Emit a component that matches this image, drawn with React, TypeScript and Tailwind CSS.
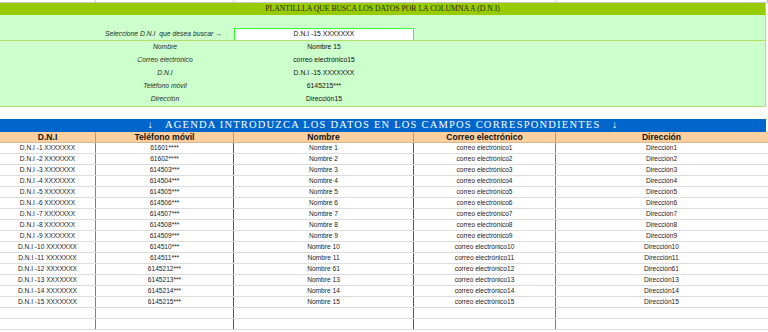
import React from 'react';

const COLS = 'grid grid-cols-[96px_138px_180px_142px_1fr]';

const rows = [
  ['D.N.I -1 XXXXXXX', '61601****', 'Nombre 1', 'correo electrónico1', 'Dirección1'],
  ['D.N.I -2 XXXXXXX', '61602****', 'Nombre 2', 'correo electrónico2', 'Dirección2'],
  ['D.N.I -3 XXXXXXX', '614503***', 'Nombre 3', 'correo electrónico3', 'Dirección3'],
  ['D.N.I -4 XXXXXXX', '614504***', 'Nombre 4', 'correo electrónico4', 'Dirección4'],
  ['D.N.I -5 XXXXXXX', '614505***', 'Nombre 5', 'correo electrónico5', 'Dirección5'],
  ['D.N.I -6 XXXXXXX', '614506***', 'Nombre 6', 'correo electrónico6', 'Dirección6'],
  ['D.N.I -7 XXXXXXX', '614507***', 'Nombre 7', 'correo electrónico7', 'Dirección7'],
  ['D.N.I -8 XXXXXXX', '614508***', 'Nombre 8', 'correo electrónico8', 'Dirección8'],
  ['D.N.I -9 XXXXXXX', '614509***', 'Nombre 9', 'correo electrónico9', 'Dirección9'],
  ['D.N.I -10 XXXXXXX', '614510***', 'Nombre 10', 'correo electrónico10', 'Dirección10'],
  ['D.N.I -11 XXXXXXX', '614511***', 'Nombre 11', 'correo electrónico11', 'Dirección11'],
  ['D.N.I -12 XXXXXXX', '6145212***', 'Nombre 61', 'correo electrónico12', 'Dirección61'],
  ['D.N.I -13 XXXXXXX', '6145213***', 'Nombre 13', 'correo electrónico13', 'Dirección13'],
  ['D.N.I -14 XXXXXXX', '6145214***', 'Nombre 14', 'correo electrónico14', 'Dirección14'],
  ['D.N.I -15 XXXXXXX', '6145215***', 'Nombre 15', 'correo electrónico15', 'Dirección15'],
  ['', '', '', '', ''],
  ['', '', '', '', ''],
];

const headers = ['D.N.I', 'Teléfono móvil', 'Nombre', 'Correo electrónico', 'Dirección'];

const found = [
  ['Nombre', 'Nombre 15'],
  ['Correo electrónico', 'correo electrónico15'],
  ['D.N.I', 'D.N.I -15 XXXXXXX'],
  ['Teléfono móvil', '6145215***'],
  ['Dirección', 'Dirección15'],
];

// vertical divider colour per column (last one has none)
const divider = ['border-[#7f7f7f]', 'border-[#595959]', 'border-[#595959]', 'border-[#7f7f7f]', 'border-transparent'];

export default function App() {
  return (
    <div className="w-[768px] h-[332px] overflow-hidden bg-white font-['Liberation_Sans',Arial,sans-serif]">
      {/* top sliver of previous row */}
      <div className={`${COLS} h-[3px] border-b border-[#c8c8c8]`}>
        {divider.map((d, i) => (
          <div key={i} className={`border-r ${d === 'border-transparent' ? 'border-[#bdbdbd]' : 'border-[#d4d4d4]'}`} />
        ))}
      </div>

      {/* search block */}
      <div className="w-[766px] border-r border-[#b2df63]">
        <div className="h-[12px] bg-[#99cc00] flex items-center justify-center">
          <span className="font-['Liberation_Serif','Times_New_Roman',serif] text-[7.7px] leading-none text-[#1c1f00]">
            PLANTILLLA QUE BUSCA LOS DATOS POR LA COLUMNA A (D.N.I)
          </span>
        </div>
        <div className="bg-[#ccffcc]">
          <div className="h-[13px]" />
          <div className="flex h-[13px] border-b border-[#b2df63]">
            <div className="w-[234px] flex items-center justify-end pr-[12px] text-[6.8px] italic text-[#1f2a1f]">
              Seleccione D.N.I&nbsp; que desea buscar →
            </div>
            <div className="w-[180px] bg-white border border-b-0 border-[#33ff33] flex items-center justify-center text-[6.8px] text-[#111]">
              D.N.I -15 XXXXXXX
            </div>
          </div>
          {found.map(([label, value]) => (
            <div key={label} className={`${COLS} h-[13px] items-center`}>
              <div />
              <div className="text-center text-[6.8px] italic text-[#1f2a1f]">{label}</div>
              <div className="text-center text-[6.8px] text-[#111]">{value}</div>
              <div />
              <div />
            </div>
          ))}
          <div className="h-px bg-[#b2df63]" />
        </div>
      </div>

      <div className="h-[12px]" />

      {/* agenda banner */}
      <div className="w-[766px] h-[13px] bg-[#0066cc] flex items-center justify-center">
        <span className="font-['Liberation_Serif','Times_New_Roman',serif] text-[10.5px] leading-none text-white tracking-[1.2px]">
          ↓&nbsp;&nbsp; AGENDA INTRODUZCA LOS DATOS EN LOS CAMPOS CORRESPONDIENTES&nbsp;&nbsp; ↓
        </span>
      </div>

      {/* header row */}
      <div className={`${COLS} h-[11px] bg-[#fcd09e] border-b border-[#d9b88f]`}>
        {headers.map((h, i) => (
          <div
            key={h}
            className={`border-r ${i === 4 ? 'border-transparent' : 'border-[#a0a0a0]'} flex items-center justify-center text-[8.6px] font-bold leading-none text-[#111]`}
          >
            {h}
          </div>
        ))}
      </div>

      {/* data rows */}
      {rows.map((r, ri) => (
        <div key={ri} className={`${COLS} h-[11px] border-b border-[#dcdcdc]`}>
          {r.map((c, ci) => (
            <div
              key={ci}
              className={`border-r ${divider[ci]} flex items-center justify-center text-[6.6px] leading-none text-[#222]`}
            >
              {c}
            </div>
          ))}
        </div>
      ))}
    </div>
  );
}
